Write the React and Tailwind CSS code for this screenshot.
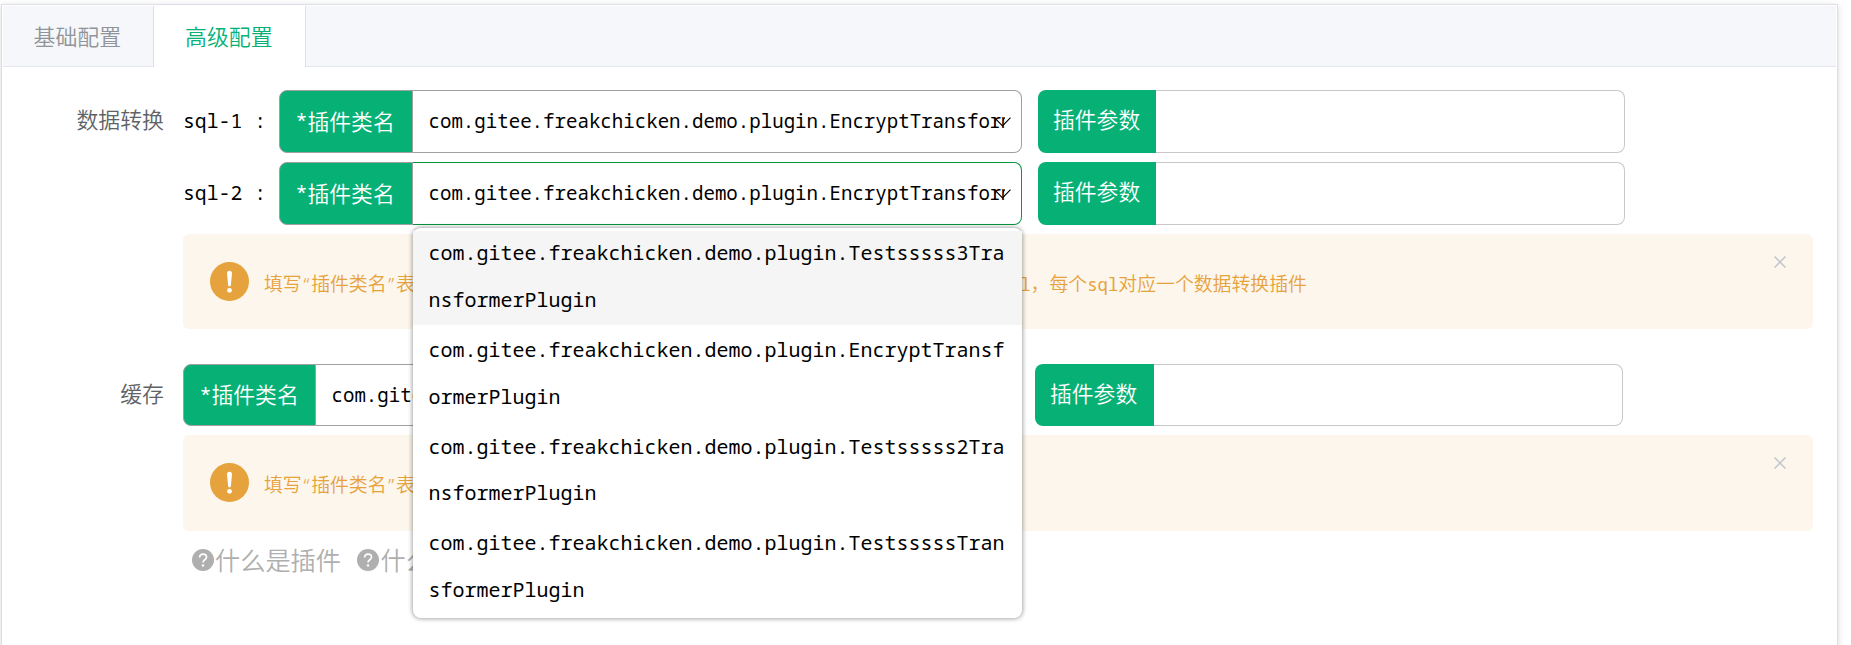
const mono = "font-['Noto_Sans_Mono','Noto_Sans_Mono_CJK_SC','Noto_Sans_CJK_SC',monospace]";

function Chevron() {
  return (
    <svg className="absolute right-[10px] top-[26px]" width="17" height="10" viewBox="0 0 17 10" fill="none" stroke="#000" strokeWidth="1.1">
      <path d="M.5 .7 8.5 9 16.5 .7" />
    </svg>
  );
}

function PluginSelect({ width, height, labelWidth, active }) {
  return (
    <div className="flex" style={{ width, height }}>
      <div
        className="flex shrink-0 items-center rounded-l-[8px] border border-[#a0a0a0] bg-[#07b176] pb-px pl-[15.5px] text-white"
        style={{ width: labelWidth }}
      >
        <span className={`w-[12px] text-[20px] ${mono}`}>*</span>
        <span className="whitespace-nowrap text-[21.8px] font-[350]">插件类名</span>
      </div>
      <div
        className={`relative flex flex-1 items-center rounded-r-[8px] border border-l-0 bg-white pl-[15.5px] ${active ? "border-[#07963c]" : "border-[#a0a0a0]"}`}
      >
        <div className={`w-[576px] overflow-hidden whitespace-nowrap text-[19.1px] text-black ${mono}`}>
          com.gitee.freakchicken.demo.plugin.EncryptTransformerPlugin
        </div>
        <Chevron />
      </div>
    </div>
  );
}

function PluginParam({ height, labelWidth, wide }) {
  return (
    <div className={`flex ${wide ? "w-[588px]" : "w-[587px]"}`} style={{ height }}>
      <div
        className="flex shrink-0 items-center rounded-l-[8px] bg-[#07b176] pb-[4px] pl-[15px] text-[21.8px] font-[350] text-white"
        style={{ width: labelWidth }}
      >
        插件参数
      </div>
      <div className="flex-1 rounded-r-[8px] border border-l-0 border-[#c8c8c8] bg-white" />
    </div>
  );
}

function Q({ children }) {
  return <span className="inline-block w-[9.4px] text-center font-['Noto_Sans',sans-serif]">{children}</span>;
}

function Sql() {
  return <span className={`text-[17.3px] font-normal ${mono}`}>sql</span>;
}

function Alert({ height, children }) {
  return (
    <div className="flex w-[1630px] rounded-[6px] bg-[#fdf6ec] pl-[27px] pr-[27px]" style={{ height }}>
      <svg className="mt-[28px] shrink-0" width="39" height="39" viewBox="0 0 39 39">
        <circle cx="19.5" cy="19.5" r="19.5" fill="#e6a23c" />
        <path d="M17 11.2a2.5 2.5 0 0 1 5 0L20.9 23a1.4 1.4 0 0 1-2.8 0z" fill="#fff" />
        <circle cx="19.5" cy="28.3" r="2.4" fill="#fff" />
      </svg>
      <div className="mt-[35px] ml-[15px] h-[28px] flex-1 whitespace-nowrap text-[18.87px] leading-[28px] font-[350] text-[#e6a23c]">{children}</div>
      <svg className="mt-[22px] shrink-0" width="12" height="12" viewBox="0 0 12 12" stroke="#c0c4cc" strokeWidth="1.5">
        <path d="M.5 .5 11.5 11.5M11.5 .5 .5 11.5" />
      </svg>
    </div>
  );
}

function HelpLink({ children }) {
  return (
    <div className="flex items-center">
      <svg width="22" height="22" viewBox="0 0 22 22">
        <circle cx="11" cy="11" r="11" fill="#afafaf" />
        <path d="M7.6 8.6C7.6 6.400 9 5.200 11 5.200s3.500 1.300 3.500 3.100c0 2.400-3.500 2.500-3.500 5.100" fill="none" stroke="#fff" strokeWidth="1.700" />
        <circle cx="11" cy="16.400" r="1.200" fill="#fff" />
      </svg>
      <span className="ml-px pb-[2px] whitespace-nowrap text-[25.2px] leading-[36px] font-[350] text-[#afafaf]">{children}</span>
    </div>
  );
}

const options = [
  ["com.gitee.freakchicken.demo.plugin.Testsssss3Tra", "nsformerPlugin"],
  ["com.gitee.freakchicken.demo.plugin.EncryptTransf", "ormerPlugin"],
  ["com.gitee.freakchicken.demo.plugin.Testsssss2Tra", "nsformerPlugin"],
  ["com.gitee.freakchicken.demo.plugin.TestsssssTran", "sformerPlugin"],
];

function Dropdown() {
  return (
    <div className="absolute left-[413px] top-[228px] flex h-[390px] w-[609px] flex-col gap-[3.33px] rounded-[8px] bg-white py-[3.33px] shadow-[0_0_4px_1px_rgba(0,0,0,0.35)]">
      {options.map((lines, i) => (
        <div key={i} className={`h-[93.33px] pl-[15.5px] text-[20px] leading-[46.67px] text-black ${mono} ${i === 0 ? "bg-[#f5f5f5]" : ""}`}>
          {lines.map((line) => (
            <div key={line} className="relative -top-px whitespace-nowrap">{line}</div>
          ))}
        </div>
      ))}
    </div>
  );
}

function SqlRow({ name, active }) {
  return (
    <div className="flex">
      <div className={`w-[96px] whitespace-pre text-[19.8px] leading-[61px] text-black ${mono}`}>{name}</div>
      <PluginSelect width={743} height={63} labelWidth={134} active={active} />
      <div className="w-[16px]" />
      <PluginParam height={63} labelWidth={118} />
    </div>
  );
}

export default function App() {
  return (
    <div className="relative h-[645px] w-[1851px] overflow-hidden bg-white pl-px pt-[4px] font-['Noto_Sans_CJK_SC',sans-serif]">
      <div className="h-[700px] w-[1837px] border border-[#dcdfe6] bg-white p-px shadow-[0_2px_6px_0_rgba(0,0,0,0.12),0_0_8px_0_rgba(0,0,0,0.04)]">
        <div className="flex h-[61px] text-[21.9px] leading-[59px] font-[350]">
          <div className="w-[150px] border-b border-[#e4e7ed] bg-[#f5f7fa] pl-[30.5px] text-[#909399]">基础配置</div>
          <div className="w-[153px] border-x border-[#dcdfe6] bg-white pl-[31px] text-[#07b176]">高级配置</div>
          <div className="flex-1 border-b border-[#e4e7ed] bg-[#f5f7fa]" />
        </div>
        <div className="flex pt-[23px]">
          <div className="w-[180px] pr-[19px] text-right text-[21.9px] leading-[58px] font-[350] text-[#606266]">数据转换</div>
          <div className="flex flex-col gap-[9px]">
            <SqlRow name="sql-1 :" />
            <SqlRow name="sql-2 :" active />
            <Alert height={95}>
              填写<Q>“</Q>插件类名<Q>”</Q>表示开启数据转换，会对查询结果数据进行转换处理，如果存在多条执行<Sql />，每个<Sql />对应一个数据转换插件
            </Alert>
          </div>
        </div>
        <div className="flex pt-[35px]">
          <div className="w-[180px] pr-[19px] text-right text-[21.9px] leading-[58px] font-[350] text-[#606266]">缓存</div>
          <div>
            <div className="flex gap-[16px]">
              <PluginSelect width={836} height={62} labelWidth={133} />
              <PluginParam height={62} labelWidth={119} wide />
            </div>
            <div className="h-[9px]" />
            <Alert height={96}>
              填写<Q>“</Q>插件类名<Q>”</Q>表示开启缓存
            </Alert>
            <div className="mt-[10px] ml-[9px] flex gap-[16.5px]">
              <HelpLink>什么是插件</HelpLink>
              <HelpLink>什么是缓存</HelpLink>
            </div>
          </div>
        </div>
      </div>
      <Dropdown />
    </div>
  );
}
